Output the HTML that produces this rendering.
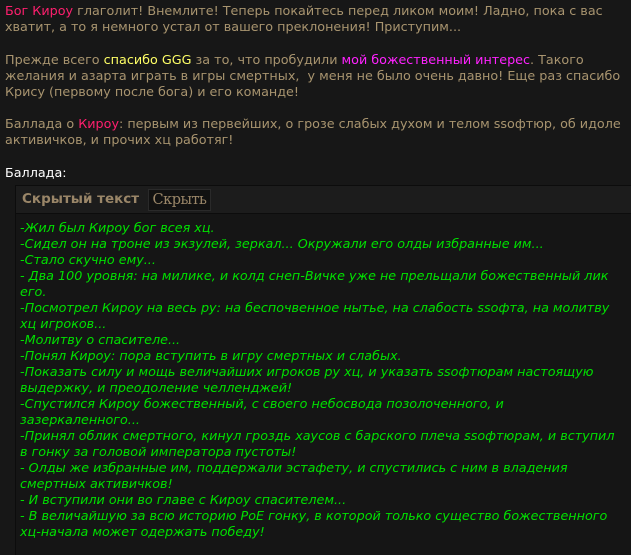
<!DOCTYPE html>
<html><head><meta charset="utf-8"><style>
html,body{margin:0;padding:0;background:#171717;width:631px;height:555px;overflow:hidden}
body{font-family:"DejaVu Sans",Verdana,sans-serif;font-size:12.75px;line-height:16px;color:#a8946f;position:relative}
.t{position:absolute;left:5px;white-space:nowrap}
.p{color:#ff1f6e}.y{color:#ffff66}.m{color:#ff22ff}.w{color:#fff}
.box{position:absolute;left:15px;top:185px;width:620px;height:375px;border:1px solid #0c0c0c;background:#151515;overflow:hidden}
.hd{height:27px;background:#1c1c1c;border-bottom:1px solid #0c0c0c;position:relative}
.hd b{position:absolute;left:6px;top:5px;font-size:13.5px;color:#9a8668}
.btn{position:absolute;left:132px;top:3px;width:61px;height:20px;border:1px solid #2a2a2a;background:#111;font-family:"DejaVu Serif","Liberation Serif",serif;font-size:14.5px;line-height:20px;text-align:center;color:#9a8668;letter-spacing:-0.5px}
.g{position:absolute;left:4px;top:35px;color:#00e000;font-style:italic;white-space:nowrap;line-height:16px}
</style></head><body>
<div class="t" style="top:4px"><span class="p">Бог Кироу</span> глаголит! Внемлите! Теперь покайтесь перед ликом моим! Ладно, пока с вас<br>хватит, а то я немного устал от вашего преклонения! Приступим...</div>
<div class="t" style="top:53px">Прежде всего <span class="y">спасибо GGG</span> за то, что пробудили <span class="m">мой божественный интерес</span>. Такого<br>желания и азарта играть в игры смертных,&nbsp; у меня не было очень давно! Еще раз спасибо<br>Крису (первому после бога) и его команде!</div>
<div class="t" style="top:117px">Баллада о <span class="p">Кироу</span>: первым из первейших, о грозе слабых духом и телом ssoфтюр, об идоле<br>активичков, и прочих хц работяг!</div>
<div class="t w" style="top:166px">Баллада:</div>
<div class="box"><div class="hd"><b>Скрытый текст</b><div class="btn">Скрыть</div></div>
<div class="g">-Жил был Кироу бог всея хц.<br>-Сидел он на троне из экзулей, зеркал... Окружали его олды избранные им...<br>-Стало скучно ему...<br>- Два 100 уровня: на милике, и колд снеп-Вичке уже не прельщали божественный лик<br>его.<br>-Посмотрел Кироу на весь ру: на беспочвенное нытье, на слабость ssoфтa, на молитву<br>хц игроков...<br>-Молитву о спасителе...<br>-Понял Кироу: пора вступить в игру смертных и слабых.<br>-Показать силу и мощь величайших игроков ру хц, и указать ssoфтюрам настоящую<br>выдержку, и преодоление челленджей!<br>-Спустился Кироу божественный, с своего небосвода позолоченного, и<br>зазеркаленного...<br>-Принял облик смертного, кинул гроздь хаусов с барского плеча ssoфтюрам, и вступил<br>в гонку за головой императора пустоты!<br>- Олды же избранные им, поддержали эстафету, и спустились с ним в владения<br>смертных активичков!<br>- И вступили они во главе с Кироу спасителем...<br>- В величайшую за всю историю PoE гонку, в которой только существо божественного<br>хц-начала может одержать победу!</div>
</div>
</body></html>
